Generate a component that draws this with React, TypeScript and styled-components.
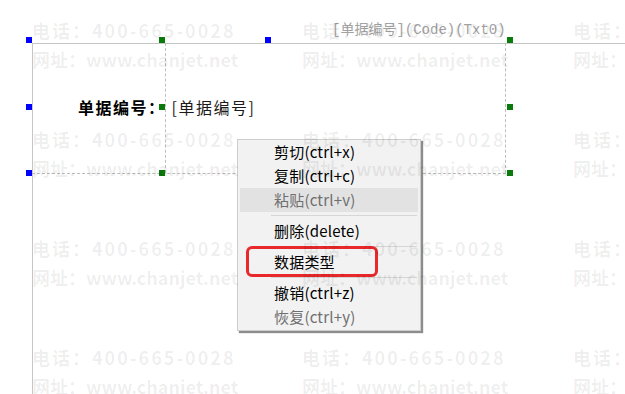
import React from "react";
import styled, { createGlobalStyle } from "styled-components";

const GlobalStyle = createGlobalStyle`
  html, body {
    margin: 0;
    padding: 0;
    background: #fff;
  }

  body {
    width: 625px;
    height: 394px;
    overflow: hidden;
    font-family: "Noto Sans CJK SC", "Noto Sans", sans-serif;
  }
`;

const Canvas = styled.div`
  position: relative;
  width: 625px;
  height: 394px;
  overflow: hidden;
  background: #fff;
`;

// the page border of the report body
const PageFrame = styled.div`
  position: absolute;
  left: 32px;
  top: 43px;
  right: 0;
  bottom: 0;
  border-left: 1px solid #c6c6c6;
  border-top: 1px solid #c6c6c6;
`;

// dashed cells of the selected header band
const BandGrid = styled.div`
  position: absolute;
  left: 32px;
  top: 43px;
  display: grid;
  grid-template-columns: 134px 340px;
  height: 130px;
  border-bottom: 1px dashed #bdbdbd;
`;

const BandCell = styled.div`
  border-right: 1px dashed #bdbdbd;
`;

const Handle = styled.span<{ $x: number; $y: number; $color: string }>`
  position: absolute;
  left: ${(p) => p.$x}px;
  top: ${(p) => p.$y}px;
  width: 6px;
  height: 6px;
  background: ${(p) => p.$color};
`;

const FieldTag = styled.div`
  position: absolute;
  left: 332px;
  top: 21px;
  line-height: 18px;
  font-family: "Liberation Mono", "Noto Sans CJK SC", monospace;
  font-size: 14px;
  color: #a2a2a2;
  white-space: nowrap;
`;

const Field = styled.div`
  position: absolute;
  left: 78px;
  top: 96px;
  display: flex;
  align-items: center;
  gap: 6px;
  font-size: 16px;
  line-height: 22px;
  white-space: nowrap;
`;

const FieldLabel = styled.span`
  font-weight: 700;
  letter-spacing: 1.5px;
  color: #000;
`;

const FieldValue = styled.span`
  letter-spacing: 1.5px;
  color: #1a1a1a;
`;

const Menu = styled.div`
  position: absolute;
  left: 237px;
  top: 139px;
  width: 184px;
  box-sizing: border-box;
  padding: 0 2px 1px;
  background: #f2f2f2;
  border: 1px solid #cdcdcd;
  box-shadow: 2px 2px 1px rgba(0, 0, 0, 0.45);
  display: flex;
  flex-direction: column;
`;

const MenuItem = styled.div<{ $disabled?: boolean; $hover?: boolean }>`
  position: relative;
  height: 24px;
  line-height: 24px;
  padding-left: 34px;
  font-size: 15px;
  letter-spacing: 0.2px;
  color: ${(p) => (p.$disabled ? "#6f6f6f" : "#000")};
  background: ${(p) => (p.$hover ? "#e2e2e2" : "transparent")};
  white-space: nowrap;
`;

const Separator = styled.div`
  height: 1px;
  margin: 3px 1px 3px 31px;
  background: #d6d6d6;
`;

const Callout = styled.span`
  position: absolute;
  left: 6px;
  top: -4px;
  width: 132px;
  height: 31px;
  box-sizing: border-box;
  border: 3px solid #e8282b;
  border-radius: 6px;
`;

const Watermark = styled.div`
  position: absolute;
  inset: 0;
  padding: 16px 0 0 32px;
  display: grid;
  grid-template-columns: 270px 271px 270px;
  grid-auto-rows: 109px;
  pointer-events: none;
  z-index: 10;
`;

const WatermarkTile = styled.div`
  font-size: 18px;
  font-weight: 700;
  line-height: 29px;
  color: rgba(0, 0, 0, 0.07);
  white-space: nowrap;
`;

const WatermarkLine = styled.div<{ $spacing: number }>`
  letter-spacing: ${(p) => p.$spacing}px;
`;

const handles = [
  { x: 26, y: 37, color: "#0000ff" },
  { x: 159, y: 37, color: "#0a7a0a" },
  { x: 265, y: 37, color: "#0000ff" },
  { x: 507, y: 37, color: "#0a7a0a" },
  { x: 26, y: 104, color: "#0000ff" },
  { x: 159, y: 104, color: "#0a7a0a" },
  { x: 507, y: 104, color: "#0a7a0a" },
  { x: 26, y: 170, color: "#0000ff" },
  { x: 159, y: 170, color: "#0a7a0a" },
  { x: 507, y: 170, color: "#0a7a0a" },
];

const App: React.FC = () => {
  return (
    <>
      <GlobalStyle />
      <Canvas>
        <PageFrame />
        <BandGrid>
          <BandCell />
          <BandCell />
        </BandGrid>

        <FieldTag>[单据编号](Code)(Txt0)</FieldTag>

        <Field>
          <FieldLabel>单据编号：</FieldLabel>
          <FieldValue>[单据编号]</FieldValue>
        </Field>

        {handles.map((h, i) => (
          <Handle key={i} $x={h.x} $y={h.y} $color={h.color} />
        ))}

        <Menu>
          <MenuItem>剪切(ctrl+x)</MenuItem>
          <MenuItem>复制(ctrl+c)</MenuItem>
          <MenuItem $disabled $hover>
            粘贴(ctrl+v)
          </MenuItem>
          <Separator />
          <MenuItem>删除(delete)</MenuItem>
          <Separator />
          <MenuItem>
            数据类型
            <Callout />
          </MenuItem>
          <Separator />
          <MenuItem>撤销(ctrl+z)</MenuItem>
          <MenuItem $disabled>恢复(ctrl+y)</MenuItem>
        </Menu>

        <Watermark>
          {Array.from({ length: 12 }).map((_, i) => (
            <WatermarkTile key={i}>
              <WatermarkLine $spacing={2}>电话：400-665-0028</WatermarkLine>
              <WatermarkLine $spacing={0}>网址：www.chanjet.net</WatermarkLine>
            </WatermarkTile>
          ))}
        </Watermark>
      </Canvas>
    </>
  );
};

export default App;
